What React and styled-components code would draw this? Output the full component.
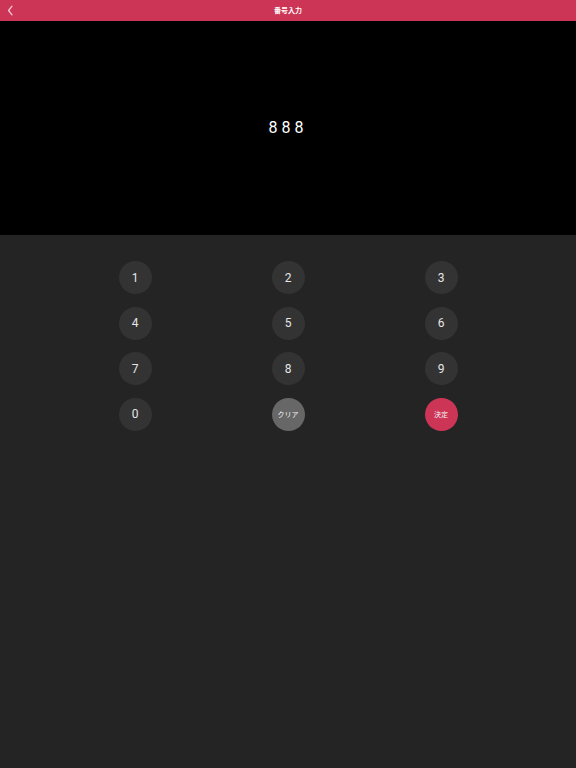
import styled, { createGlobalStyle } from "styled-components";

const GlobalStyle = createGlobalStyle`
    html, body {
        margin: 0;
        padding: 0;
        background-color: #242424;
        font-family: "Roboto", "Noto Sans CJK JP", sans-serif;
    }
`

const keys = ["1", "2", "3", "4", "5", "6", "7", "8", "9", "0"];

const App = () => {
    return (
        <Page>
            <GlobalStyle />
            <Header>
                <BackButton type="button" aria-label="戻る">
                    <svg width="7" height="11" viewBox="0 0 7 11" fill="none">
                        <path d="M5 1.2L1.6 5.5 5 9.8" stroke="#f3c6d0" strokeWidth="1.3" strokeLinecap="round" strokeLinejoin="round" />
                    </svg>
                </BackButton>
                <Title>番号入力</Title>
            </Header>

            <Display>
                <Number>888</Number>
            </Display>

            <Pad>
                {keys.map(k => (
                    <Cell key={k}>
                        <Key type="button">{k}</Key>
                    </Cell>
                ))}
                <Cell>
                    <Key type="button" variant="clear" small>クリア</Key>
                </Cell>
                <Cell>
                    <Key type="button" variant="submit" small>決定</Key>
                </Cell>
            </Pad>
        </Page>
    );
}

const Page = styled.div`
    min-height: 768px;
    display: flex;
    flex-direction: column;
    background-color: #242424;
`

const Header = styled.header`
    position: relative;
    height: 21px;
    display: flex;
    align-items: center;
    justify-content: center;
    background-color: #cc3556;
`

const BackButton = styled.button`
    position: absolute;
    left: 7px;
    top: 5px;
    display: flex;
    padding: 0;
    border: none;
    background: transparent;
    cursor: pointer;
`

const Title = styled.h1`
    margin: 0;
    color: #fff;
    font-size: 7px;
    font-weight: 700;
    font-family: "Noto Sans CJK JP", sans-serif;
    line-height: 1;
`

const Display = styled.div`
    height: 214px;
    display: flex;
    align-items: center;
    justify-content: center;
    background-color: #000;
`

const Number = styled.p`
    margin: 0;
    color: #fff;
    font-size: 16px;
    letter-spacing: 4px;
    line-height: 1;
`

const Pad = styled.div`
    display: grid;
    grid-template-columns: repeat(3, 153px);
    row-gap: 12.5px;
    justify-content: center;
    padding-top: 26px;
`

const Cell = styled.div`
    display: flex;
    justify-content: center;
`

const colors = {
    digit: "#333333",
    clear: "#676767",
    submit: "#cc3556",
}

const Key = styled.button`
    width: 33px;
    height: 33px;
    border-radius: 50%;
    border: none;
    padding: 0;
    display: flex;
    align-items: center;
    justify-content: center;
    background-color: ${({ variant }) => colors[variant || "digit"]};
    color: ${({ variant }) => (variant ? "#f4f4f4" : "#e6e6e6")};
    font-family: ${({ small }) => (small ? '"Noto Sans CJK JP", sans-serif' : '"Roboto", sans-serif')};
    font-size: ${({ small }) => (small ? "7px" : "12px")};
    cursor: pointer;
`

export default App;
